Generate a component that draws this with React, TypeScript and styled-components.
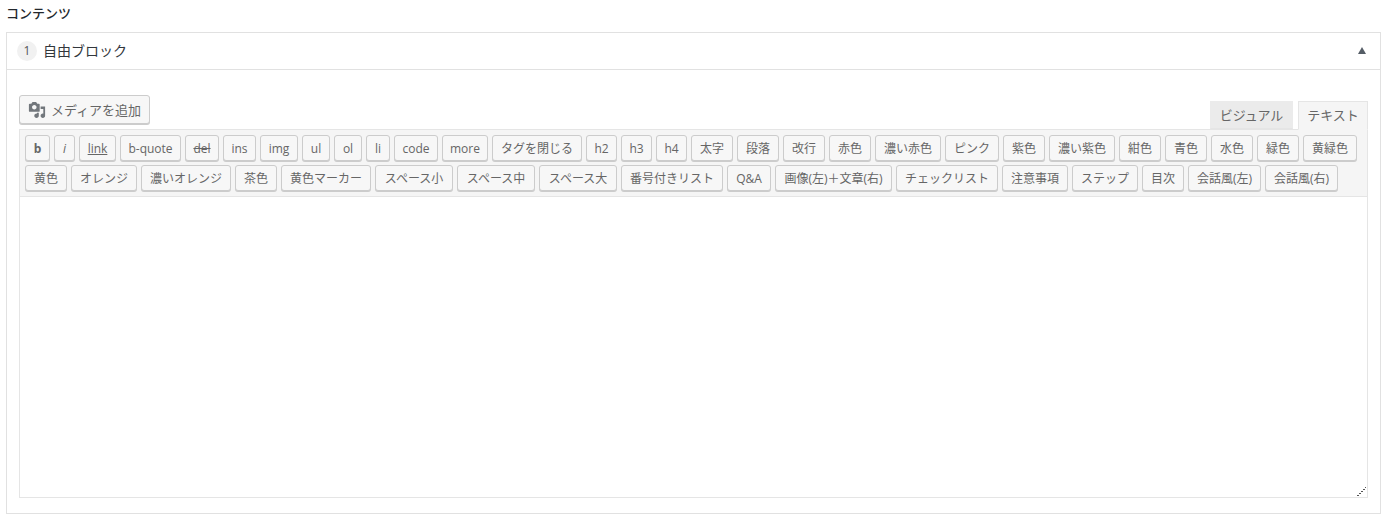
import styled, { createGlobalStyle } from 'styled-components';

const FONT = '"Open Sans", "Noto Sans CJK JP", sans-serif';

type Tag = { label: string; width: number };

const rowOne: Tag[] = [
  { label: 'b', width: 25 },
  { label: 'i', width: 21 },
  { label: 'link', width: 37 },
  { label: 'b-quote', width: 61 },
  { label: 'del', width: 34 },
  { label: 'ins', width: 33 },
  { label: 'img', width: 38 },
  { label: 'ul', width: 28 },
  { label: 'ol', width: 28 },
  { label: 'li', width: 24 },
  { label: 'code', width: 44 },
  { label: 'more', width: 46 },
  { label: 'タグを閉じる', width: 90 },
  { label: 'h2', width: 31 },
  { label: 'h3', width: 31 },
  { label: 'h4', width: 31 },
  { label: '太字', width: 42 },
  { label: '段落', width: 42 },
  { label: '改行', width: 42 },
  { label: '赤色', width: 42 },
  { label: '濃い赤色', width: 66 },
  { label: 'ピンク', width: 54 },
  { label: '紫色', width: 42 },
  { label: '濃い紫色', width: 66 },
  { label: '紺色', width: 42 },
  { label: '青色', width: 42 },
  { label: '水色', width: 42 },
  { label: '緑色', width: 42 },
  { label: '黄緑色', width: 54 },
];

const rowTwo: Tag[] = [
  { label: '黄色', width: 42 },
  { label: 'オレンジ', width: 66 },
  { label: '濃いオレンジ', width: 90 },
  { label: '茶色', width: 42 },
  { label: '黄色マーカー', width: 90 },
  { label: 'スペース小', width: 78 },
  { label: 'スペース中', width: 78 },
  { label: 'スペース大', width: 78 },
  { label: '番号付きリスト', width: 102 },
  { label: 'Q&A', width: 44 },
  { label: '画像(左)＋文章(右)', width: 117 },
  { label: 'チェックリスト', width: 102 },
  { label: '注意事項', width: 66 },
  { label: 'ステップ', width: 66 },
  { label: '目次', width: 42 },
  { label: '会話風(左)', width: 73 },
  { label: '会話風(右)', width: 73 },
];

const GlobalStyle = createGlobalStyle`
  body {
    margin: 0;
    background: #fff;
    font-family: ${FONT};
    color: #32373c;
  }
`;

const Page = styled.div`
  width: 1389px;
  height: 521px;
  padding: 0 8px 0 6px;
  box-sizing: border-box;
  overflow: hidden;
`;

const FieldLabel = styled.div`
  height: 32px;
  padding-top: 3px;
  box-sizing: border-box;
  font-size: 13px;
  line-height: 20px;
  font-weight: 500;
  color: #23282d;
`;

const Block = styled.section`
  width: 1375px;
  height: 482px;
  box-sizing: border-box;
  border: 1px solid #e1e1e1;
`;

const BlockHeader = styled.header`
  display: flex;
  align-items: center;
  height: 37px;
  box-sizing: border-box;
  padding: 0 14px 0 10px;
  border-bottom: 1px solid #e1e1e1;
`;

const OrderBadge = styled.span`
  width: 20px;
  height: 20px;
  border-radius: 50%;
  background: #f1f1f1;
  color: #555;
  font-size: 12px;
  line-height: 20px;
  text-align: center;
`;

const BlockTitle = styled.h3`
  flex: 1;
  margin: 0 0 0 6px;
  font-size: 14px;
  font-weight: 400;
  line-height: 20px;
  color: #32373c;
`;

const CollapseArrow = styled.span`
  width: 0;
  height: 0;
  margin-bottom: 2px;
  border-left: 4px solid transparent;
  border-right: 4px solid transparent;
  border-bottom: 7px solid #555d66;
`;

const EditorBody = styled.div`
  padding: 25px 12px 0;
`;

const EditorTools = styled.div`
  display: flex;
  justify-content: space-between;
  align-items: flex-end;
  height: 34px;
`;

const MediaButton = styled.button`
  display: flex;
  align-items: center;
  gap: 5px;
  align-self: flex-start;
  width: 131px;
  height: 29px;
  padding: 0 0 0 8px;
  box-sizing: border-box;
  border: 1px solid #ccc;
  border-radius: 3px;
  background: #f7f7f7;
  box-shadow: 0 1px 0 #ccc;
  color: #666;
  font-family: ${FONT};
  font-size: 13px;
`;

const Tabs = styled.div`
  display: flex;
  gap: 5px;
  align-items: flex-end;
`;

const Tab = styled.div<{ $active?: boolean; $w: number }>`
  width: ${(p) => p.$w}px;
  height: ${(p) => (p.$active ? 29 : 28)}px;
  box-sizing: border-box;
  margin-bottom: ${(p) => (p.$active ? -1 : 0)}px;
  position: relative;
  border: 1px solid ${(p) => (p.$active ? '#e5e5e5' : '#ebebeb')};
  border-bottom-color: ${(p) => (p.$active ? '#f5f5f5' : '#e5e5e5')};
  background: ${(p) => (p.$active ? '#f5f5f5' : '#ebebeb')};
  color: #666;
  font-size: 13px;
  line-height: 26px;
  text-align: center;
`;

const Toolbar = styled.div`
  display: flex;
  flex-direction: column;
  gap: 4px;
  height: 68px;
  box-sizing: border-box;
  padding: 5px 5px 0;
  background: #f5f5f5;
  border: 1px solid #e5e5e5;
`;

const ButtonRow = styled.div`
  display: flex;
  gap: 4px;
`;

const TagButton = styled.button<{ $tag: string; $w: number }>`
  flex: none;
  width: ${(p) => p.$w}px;
  height: 26px;
  padding: 2px 0 0;
  box-sizing: border-box;
  border: 1px solid #ccc;
  border-radius: 3px;
  background: #f7f7f7;
  box-shadow: 0 1px 0 #ccc;
  color: #666;
  font-family: ${FONT};
  font-size: 12px;
  line-height: 20px;
  white-space: nowrap;
  font-weight: ${(p) => (p.$tag === 'b' ? 700 : 400)};
  font-style: ${(p) => (p.$tag === 'i' ? 'italic' : 'normal')};
  text-decoration: ${(p) =>
    p.$tag === 'link' ? 'underline' : p.$tag === 'del' ? 'line-through' : 'none'};
`;

const AreaWrap = styled.div`
  position: relative;
`;

const ContentArea = styled.textarea`
  display: block;
  width: 100%;
  height: 301px;
  margin: 0;
  padding: 10px;
  box-sizing: border-box;
  border: 1px solid #e5e5e5;
  border-top: 0;
  outline: 0;
  background: #fff;
  resize: none;
`;

const ResizeGrip = styled.svg`
  position: absolute;
  right: 1px;
  bottom: 1px;
`;

function MediaIcon() {
  return (
    <svg width="18" height="18" viewBox="0 0 20 20" fill="#72777c">
      <path d="M13 11V4c0-.55-.45-1-1-1h-1.67L9 1H5L3.67 3H2c-.55 0-1 .45-1 1v7c0 .55.45 1 1 1h10c.55 0 1-.45 1-1zM7 4.5c1.38 0 2.5 1.12 2.5 2.5S8.38 9.5 7 9.5 4.5 8.38 4.5 7 5.62 4.5 7 4.5zM14 6h5v10.5c0 1.38-1.12 2.5-2.5 2.5S14 17.88 14 16.5s1.12-2.5 2.5-2.5c.17 0 .34.02.5.05V9h-3V6zm-4 8.05V13h2v3.5c0 1.38-1.12 2.5-2.5 2.5S7 17.88 7 16.5 8.12 14 9.5 14c.17 0 .34.02.5.05z" />
    </svg>
  );
}

// dotted double diagonal, one square per pixel
const gripDots = [0, 2, 4, 6, 8].flatMap((i) => [
  `M${i} ${8 - i}h1v1h-1z`,
  i < 8 ? `M${i + 1} ${8 - i}h1v1h-1z` : '',
]);

function Grip() {
  return (
    <ResizeGrip width="10" height="10" viewBox="0 0 10 10">
      <path d={gripDots.join('')} fill="#555" />
    </ResizeGrip>
  );
}

export default function App() {
  return (
    <Page>
      <GlobalStyle />
      <FieldLabel>コンテンツ</FieldLabel>
      <Block>
        <BlockHeader>
          <OrderBadge>1</OrderBadge>
          <BlockTitle>自由ブロック</BlockTitle>
          <CollapseArrow />
        </BlockHeader>
        <EditorBody>
          <EditorTools>
            <MediaButton>
              <MediaIcon />
              メディアを追加
            </MediaButton>
            <Tabs>
              <Tab $w={83}>ビジュアル</Tab>
              <Tab $w={70} $active>
                テキスト
              </Tab>
            </Tabs>
          </EditorTools>
          <Toolbar>
            <ButtonRow>
              {rowOne.map((tag) => (
                <TagButton key={tag.label} $tag={tag.label} $w={tag.width}>
                  {tag.label}
                </TagButton>
              ))}
            </ButtonRow>
            <ButtonRow>
              {rowTwo.map((tag) => (
                <TagButton key={tag.label} $tag={tag.label} $w={tag.width}>
                  {tag.label}
                </TagButton>
              ))}
            </ButtonRow>
          </Toolbar>
          <AreaWrap>
            <ContentArea />
            <Grip />
          </AreaWrap>
        </EditorBody>
      </Block>
    </Page>
  );
}
